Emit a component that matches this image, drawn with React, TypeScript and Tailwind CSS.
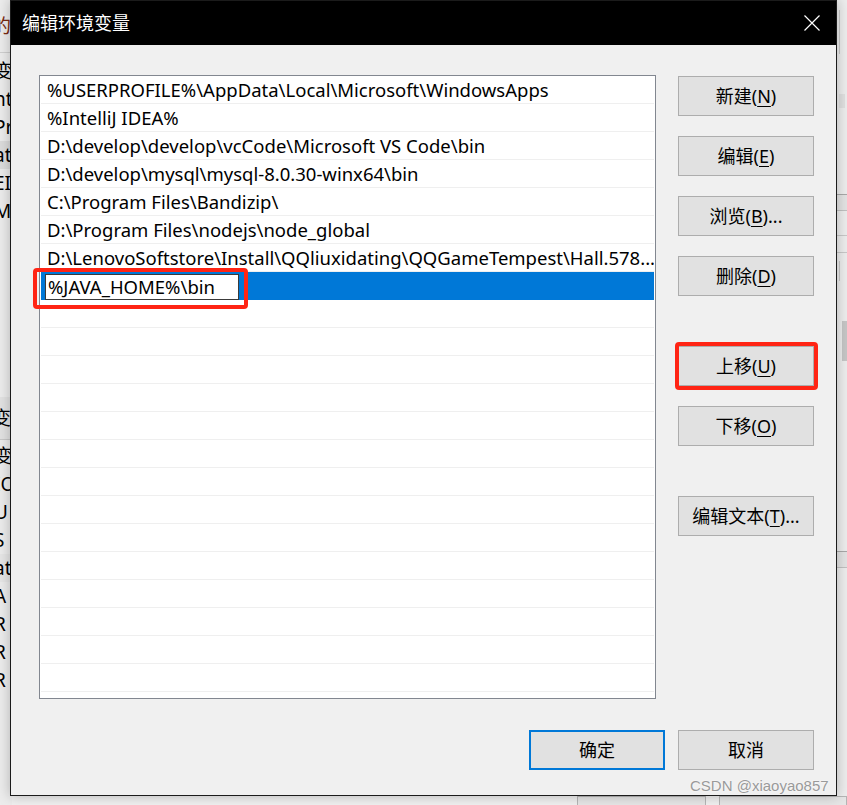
import type { ReactNode } from 'react'

const paths = [
  '%USERPROFILE%\\AppData\\Local\\Microsoft\\WindowsApps',
  '%IntelliJ IDEA%',
  'D:\\develop\\develop\\vcCode\\Microsoft VS Code\\bin',
  'D:\\develop\\mysql\\mysql-8.0.30-winx64\\bin',
  'C:\\Program Files\\Bandizip\\',
  'D:\\Program Files\\nodejs\\node_global',
  'D:\\LenovoSoftstore\\Install\\QQliuxidating\\QQGameTempest\\Hall.578...',
]

const emptyRows = Array.from({ length: 14 }, (_, i) => i)

const leftTop = ['变量', 'nt', 'Pr', 'at', 'EI', 'M']
const leftBottom = ['变量', 'IO', 'U', 'S', 'at', 'A', 'R', 'R', 'R']

function WinButton({ children, primary = false }: { children: ReactNode; primary?: boolean }) {
  return (
    <div
      className={`flex h-[40px] w-[136px] items-center justify-center bg-[#e1e1e1] text-[18px] whitespace-nowrap text-black ${
        primary ? 'border-2 border-[#0078d7]' : 'border border-[#adadad]'
      }`}
    >
      {children}
    </div>
  )
}

function Key({ k }: { k: string }) {
  return <span className="underline decoration-1 underline-offset-[3px]">{k}</span>
}

export default function App() {
  return (
    <div
      className="relative h-[805px] w-[847px] overflow-hidden bg-[#f0f0f0]"
      style={{ fontFamily: '"Noto Sans", "Noto Sans CJK SC", sans-serif' }}
    >
      {/* window behind, left edge */}
      <div className="absolute top-0 left-0 flex h-[805px] w-[12px] flex-col overflow-hidden bg-[#ececec] text-[19px] leading-none whitespace-nowrap text-black">
        <div className="flex h-[52px] items-center -ml-[8px] text-[#7a2a10]">的</div>
        <div className="border-t border-[#cfcfcf]" />
        <div className="flex flex-col pt-[4px]">
          {leftTop.map((t, i) => (
            <div key={i} className={`flex h-[28px] items-center -ml-[6px] ${i === 3 ? 'bg-[#dcdcdc]' : ''}`}>
              {t}
            </div>
          ))}
        </div>
        <div className="mt-[172px] flex h-[42px] items-center bg-[#e2e2e2] -ml-[8px]">变</div>
        <div className="border-t border-[#c8c8c8]" />
        <div className="flex flex-col pt-[2px]">
          {leftBottom.map((t, i) => (
            <div key={i} className={`flex h-[28px] items-center -ml-[6px] ${i === 4 ? 'bg-[#e6e6e6]' : ''}`}>
              {t}
            </div>
          ))}
        </div>
      </div>

      {/* window behind, right edge */}
      <div className="absolute top-0 right-0 flex h-[805px] w-[12px] flex-col bg-[#ededed]">
        <div className="ml-[4px] mt-[10px] h-[44px] w-[1px] bg-[#c8c8c8]" />
        <div className="ml-[4px] mt-[40px] h-[14px] w-[6px] bg-[#e0e0e0]" />
        <div className="mt-[86px] border-t border-[#a8a8a8]" />
        <div className="h-[15px] bg-[#e3e3e3]" />
        <div className="border-t border-[#c0c0c0]" />
        <div className="h-[24px]" />
        <div className="border-t border-[#c8c8c8]" />
        <div className="h-[16px]" />
        <div className="border-t border-[#c8c8c8]" />
        <div className="ml-[4px] mt-[8px] h-[20px] w-[1px] bg-[#c8c8c8]" />
        <div className="ml-[7px] mt-[40px] h-[40px] w-[5px] bg-[#c6c6c6]" />
        <div className="mt-[190px] border-t border-[#a8a8a8]" />
        <div className="h-[15px] bg-[#e3e3e3]" />
        <div className="border-t border-[#c0c0c0]" />
      </div>

      {/* window behind, bottom edge */}
      <div className="absolute bottom-0 left-0 flex h-[9px] w-[847px] gap-[13px] pl-[577px]">
        <div className="h-[20px] w-[135px] border border-[#b5b5b5] bg-[#e6e6e6]" />
        <div className="h-[20px] w-[135px] border border-[#b5b5b5] bg-[#e6e6e6]" />
      </div>

      {/* dialog */}
      <div className="absolute top-0 left-[10px] flex h-[796px] w-[827px] flex-col border border-[#1b1b1b] bg-[#f0f0f0] shadow-[0_0_12px_rgba(0,0,0,0.25)]">
        <div className="flex h-[44px] shrink-0 items-center justify-between bg-black pr-[16px] pl-[11px]">
          <span className="text-[18px] leading-none text-white">编辑环境变量</span>
          <svg width="16" height="16" viewBox="0 0 16 16">
            <path d="M0.5 0.5 L15.5 15.5 M15.5 0.5 L0.5 15.5" stroke="#ffffff" strokeWidth="1.2" />
          </svg>
        </div>

        <div className="flex flex-1 flex-col">
          <div className="flex pt-[30px] pl-[28px]">
            <div className="flex h-[624px] w-[617px] flex-col overflow-hidden border border-[#828790] bg-white px-[1px]">
              {paths.map((p) => (
                <div
                  key={p}
                  className="flex h-[28px] shrink-0 items-center overflow-hidden border-b border-[#efefef] pl-[6px] text-[18.5px] whitespace-nowrap text-black"
                >
                  {p}
                </div>
              ))}
              <div className="flex h-[28px] shrink-0 items-end bg-[#0078d7] pl-[4px]">
                <div className="flex h-[26px] w-[194px] items-center border border-[#3a3a3a] bg-white pl-[2px] text-[18.5px] whitespace-nowrap text-black">
                  %JAVA_HOME%\bin
                </div>
              </div>
              {emptyRows.map((i) => (
                <div key={i} className="h-[28px] shrink-0 border-b border-[#efefef]" />
              ))}
            </div>

            <div className="ml-[22px] flex flex-col pt-[1px]">
              <WinButton>
                新建(<Key k="N" />)
              </WinButton>
              <div className="mt-[20px]">
                <WinButton>
                  编辑(<Key k="E" />)
                </WinButton>
              </div>
              <div className="mt-[20px]">
                <WinButton>
                  浏览(<Key k="B" />)...
                </WinButton>
              </div>
              <div className="mt-[20px]">
                <WinButton>
                  删除(<Key k="D" />)
                </WinButton>
              </div>
              <div className="mt-[50px]">
                <WinButton>
                  上移(<Key k="U" />)
                </WinButton>
              </div>
              <div className="mt-[20px]">
                <WinButton>
                  下移(<Key k="O" />)
                </WinButton>
              </div>
              <div className="mt-[50px]">
                <WinButton>
                  编辑文本(<Key k="T" />)...
                </WinButton>
              </div>
            </div>
          </div>

          <div className="mt-[31px] flex justify-end gap-[13px] pr-[22px]">
            <WinButton primary>确定</WinButton>
            <WinButton>取消</WinButton>
          </div>
        </div>
      </div>

      {/* red annotations */}
      <div className="absolute top-[268px] left-[33px] h-[41px] w-[215px] rounded-[4px] border-[4px] border-[#ff2414]" />
      <div className="absolute top-[342px] left-[675px] h-[48px] w-[143px] rounded-[4px] border-[4px] border-[#ff2414]" />

      {/* watermark */}
      <div
        className="absolute top-[778px] left-[690px] text-[15px] leading-none text-[#9a9a9a]"
        style={{ fontFamily: '"Liberation Sans", Arial, sans-serif', textShadow: '0 0 2px #ffffff' }}
      >
        CSDN @xiaoyao857
      </div>
    </div>
  )
}
